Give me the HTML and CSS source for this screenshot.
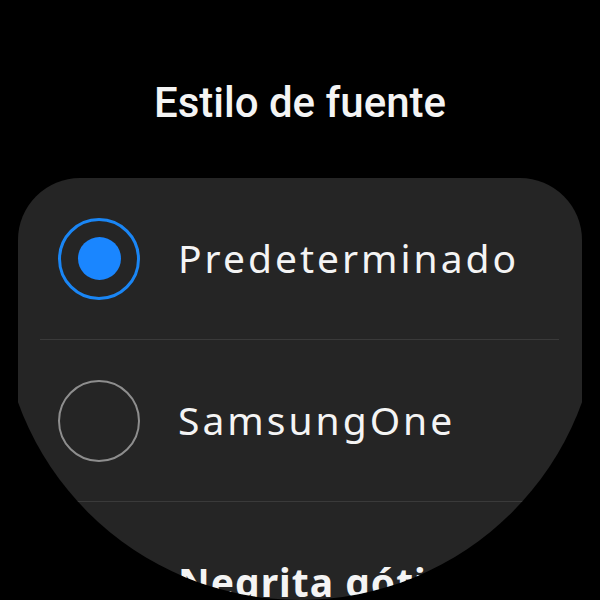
FILE: index.html
```html
<!DOCTYPE html>
<html lang="es">
    <head>
        <meta charset="UTF-8">
        <meta name="viewport" content="width=device-width, initial-scale=1" />

        <title>Estilo de fuente</title>

        <link rel="stylesheet" href="styles.css">
    </head>

    <body>
        <div id="screen">
            <h1 class="heading">Estilo de fuente</h1>

            <ul class="optionList">
                <li class="option">
                    <span class="radio radio--on"><span class="dot"></span></span>
                    <span class="label">Predeterminado</span>
                </li>
                <li class="divider"></li>
                <li class="option">
                    <span class="radio"></span>
                    <span class="label">SamsungOne</span>
                </li>
                <li class="divider"></li>
                <li class="option">
                    <span class="radio"></span>
                    <span class="label label--bold">Negrita gótica</span>
                </li>
            </ul>
        </div>
    </body>
</html>
```

FILE: styles.css
```css
html, body {
    margin: 0;
    background-color: #000;
}

body {
    font-family: Roboto, "Noto Sans", Arial, sans-serif;
    color: #f4f4f4;
}

#screen {
    width: 600px;
    height: 600px;
    overflow: hidden;
    display: flex;
    flex-direction: column;
    align-items: center;
}

.heading {
    margin: 0;
    padding-top: 82px;
    font-size: 42px;
    line-height: 42px;
    font-weight: 500;
    box-sizing: border-box;
    height: 178px;
    flex-shrink: 0;
}

.optionList {
    list-style: none;
    margin: 0;
    padding: 0;
    width: 564px;
    background-color: #252525;
    border-radius: 62px 62px 0 0;
    /* watch face: the round display cuts the card */
    clip-path: circle(300px at 282px 122px);
    flex-shrink: 0;
}

.option {
    height: 161px;
    display: flex;
    align-items: center;
    padding-left: 40px;
    gap: 38px;
}

.divider {
    height: 1px;
    margin: 0 23px 0 22px;
    background-color: #3a3a3a;
}

.radio {
    width: 82px;
    height: 82px;
    box-sizing: border-box;
    border: 2.5px solid #8e8e8e;
    border-radius: 50%;
    display: flex;
    align-items: center;
    justify-content: center;
    flex-shrink: 0;
}

.radio--on {
    border: 3px solid #1a86f5;
}

.dot {
    width: 43px;
    height: 43px;
    border-radius: 50%;
    background-color: #1a86ff;
}

.label {
    font-family: "Noto Sans", Roboto, sans-serif;
    font-size: 39px;
    line-height: 40px;
    letter-spacing: 3px;
    white-space: nowrap;
    margin-top: -2px;
}

.label--bold {
    font-weight: 700;
    letter-spacing: 1px;
}
```
